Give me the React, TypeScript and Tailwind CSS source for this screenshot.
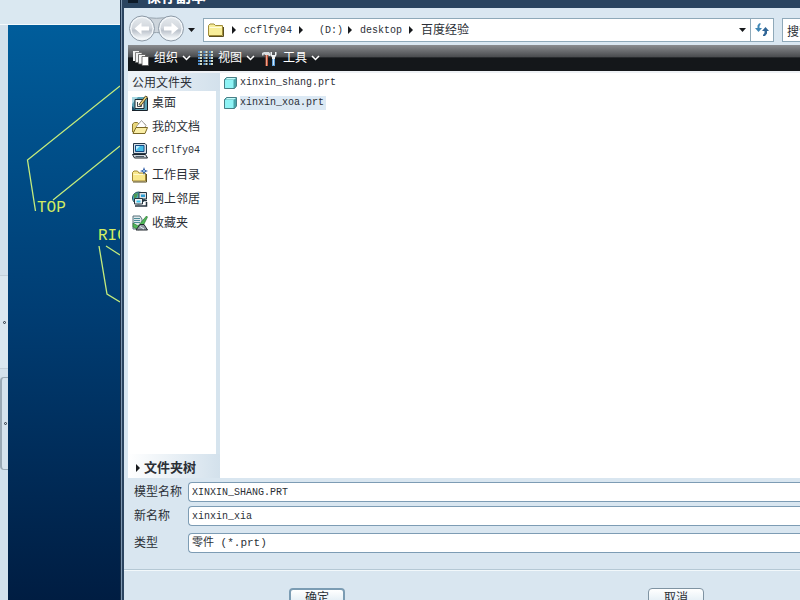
import type { ReactNode } from "react";

const cjk = "font-['Liberation_Sans','Noto_Sans_CJK_SC',sans-serif]";
const mono = "font-['Liberation_Mono','Noto_Sans_CJK_SC',monospace]";

const fieldClassName =
  "h-5 min-w-0 flex-1 rounded-l-sm border border-r-0 border-[#7d9cb4] bg-white pl-[3px] text-[#2b2f36] outline-none";

function Latin({ children }: { children: ReactNode }) {
  return (
    <span className="font-['Liberation_Mono',monospace] text-[10px]">
      {children}
    </span>
  );
}

function FolderIcon() {
  return (
    <svg viewBox="0 0 16 14" className="h-3.5 w-4 shrink-0" aria-hidden>
      <path
        d="M.5 12.500V2.500L2 1H6L7.500 2.500H14.500V12.500Z"
        fill="#f8ee9a"
        stroke="#a08c38"
      />
      <path d="M1.500 4.500H13.500" stroke="#fffcdc" />
      <path d="M1 13.500H15.500V4" stroke="#5a4f20" fill="none" />
    </svg>
  );
}

function DesktopIcon() {
  return (
    <svg viewBox="0 0 16 16" className="size-4 shrink-0" aria-hidden>
      <path d="M0 2H15V15H0Z" fill="#5ba3b5" />
      <path d="M0 2H6L0 9Z" fill="#a9d8e2" />
      <path d="M0 15V11L4 15Z" fill="#1c4d66" />
      <path d="M0 15.500H15.500V3" stroke="#17222b" fill="none" />
      <path d="M3 4.500H12V13.500H3Z" fill="#fbfbf4" stroke="#1d2b34" />
      <path d="M5.500 7V11.500H9.500V9" stroke="#3b4650" fill="none" />
      <path d="M7 9.500L13.500 1L15.500 2L9 10.500Z" fill="#ecd27a" stroke="#3a3013" strokeWidth=".8" />
    </svg>
  );
}

function DocumentsIcon() {
  return (
    <svg viewBox="0 0 16 16" className="size-4 shrink-0" aria-hidden>
      <path d="M.5 13V5L2.500 3.500H5.500L7 5H13V13Z" fill="#e9d77c" stroke="#8a7731" />
      <path d="M4 8L9.500 1.500L14 6.500L11 11Z" fill="#fff" stroke="#8b8b8b" strokeWidth=".8" />
      <path d="M1 14.500L4 8.500H15.500L13 14.500Z" fill="#faeea6" stroke="#7b6826" />
    </svg>
  );
}

function ComputerIcon() {
  return (
    <svg viewBox="0 0 16 16" className="size-4 shrink-0" aria-hidden>
      <path d="M1.500.500H13L14.500 2V10.500H1.500Z" fill="#d5dde4" stroke="#26394a" />
      <path d="M3.500 2.500H12V8.500H3.500Z" fill="#45bde8" stroke="#154a84" />
      <path d="M4 3H8L4 7Z" fill="#c2f0ff" />
      <path d="M.5 11.500H13.500L15.500 15H2.500Z" fill="#d3dae0" stroke="#1d242b" />
      <path d="M3.500 13.500H12" stroke="#4c5a66" />
    </svg>
  );
}

function WorkDirIcon() {
  return (
    <svg viewBox="0 0 16 16" className="size-4 shrink-0" aria-hidden>
      <path d="M.5 14V5.500L2 4H5.500L7 6H13.500V14Z" fill="#f9e88c" stroke="#a08634" />
      <path d="M1.500 7.500H13" stroke="#fff9cc" />
      <path d="M1 15H14.500V7" stroke="#5e5222" fill="none" />
      <path d="M12 0L13 3L16 4L13 5L12 8L11 5L8 4L11 3Z" fill="#1f4fa0" />
      <path d="M12 3V5M11 4H13" stroke="#a9dcff" />
    </svg>
  );
}

function NetworkIcon() {
  return (
    <svg viewBox="0 0 16 16" className="size-4 shrink-0" aria-hidden>
      <circle cx="6.500" cy="7" r="6" fill="#4fb0c2" stroke="#1f4d5a" />
      <path d="M2 3L6 2L5 6L2 8Z" fill="#4f9a54" />
      <path d="M7 1.500H14.500V8H7Z" fill="#d9e0e5" stroke="#27343f" />
      <path d="M9 3.500H13V6H9Z" fill="#2f9fd4" />
      <path d="M2.500 7.500H10.500V13H2.500Z" fill="#eef2f5" stroke="#27343f" />
      <path d="M4.500 9.500H8.500V11.500H4.500Z" fill="#37c3ea" />
      <path d="M11 9.500H15M3 15H14.500V11" stroke="#27343f" strokeWidth="1.500" fill="none" />
    </svg>
  );
}

function FavoritesIcon() {
  return (
    <svg viewBox="0 0 16 16" className="size-4 shrink-0" aria-hidden>
      <path d="M1 1H8L10 4V14H1Z" fill="#dfe8ea" stroke="#57717a" />
      <path d="M2 3.500H8M2 5.500H8M2 7.500H8" stroke="#4b8c98" />
      <path d="M1 8L6 11L14.500 1L15.500 2L11 11L7 15L1 12Z" fill="#4fb858" stroke="#236a2c" strokeWidth=".6" />
      <path d="M4 15L8 9.500H12L15.500 15Z" fill="#9199a4" stroke="#23282f" />
      <path d="M8 11.500L12 14" stroke="#e9eef2" />
    </svg>
  );
}

function PartIcon() {
  return (
    <svg viewBox="0 0 13 12" className="h-3 w-[13px] shrink-0" aria-hidden>
      <path d="M.5 2.500L2.500.5H12.500V9L10.500 11.500H.5Z" fill="#48a6aa" stroke="#487f86" />
      <path d="M1 3H9.500V11H1Z" fill="#8ff3f5" />
      <path d="M1.500 2.500L3 1H12L10 2.500Z" fill="#c4fbfb" />
    </svg>
  );
}

function OrganizeIcon() {
  return (
    <svg viewBox="0 0 16 15" className="h-[15px] w-4 shrink-0" aria-hidden>
      <path d="M0 0H6V10H0Z" fill="#f1f1f1" />
      <path d="M2.500 1.500H9V11.500H2.500Z" fill="#f1f1f1" stroke="#666" strokeWidth=".8" />
      <path d="M5.500 3.500H12.500V13H5.500Z" fill="#f6f6f6" stroke="#555" strokeWidth=".8" />
      <path d="M9 5.500H15.500V14.500H9Z" fill="#fff" stroke="#555" strokeWidth=".8" />
    </svg>
  );
}

function ViewsIcon() {
  const rows = [1, 4, 7, 10, 13];
  return (
    <svg viewBox="0 0 15 14" className="h-3.5 w-[15px] shrink-0" aria-hidden>
      {rows.map((y) => (
        <g key={y} strokeWidth="2">
          <path d={`M0 ${y}H2M5.500 ${y}H7.500M11 ${y}H13`} stroke="#4f8fd0" />
          <path d={`M2 ${y}H4M7.500 ${y}H9.500M13 ${y}H15`} stroke="#d4dcc4" />
        </g>
      ))}
    </svg>
  );
}

function ToolsIcon() {
  return (
    <svg viewBox="0 0 16 15" className="h-[15px] w-4 shrink-0" aria-hidden>
      <path d="M0 4V2L2 1H7L8.500 3V5H7L6 4H3L2 3L1 5Z" fill="#d9dde0" />
      <path d="M3.500 4H6V15H3.500Z" fill="#c9553a" />
      <path d="M4 4H5V15H4Z" fill="#e8a48c" />
      <path d="M8.500 1V4L10 6.500V8H13V6.500L14.500 4V1H13V4H10V1Z" fill="#eef1f3" />
      <path d="M10 8H13V15H10Z" fill="#5e9fd8" />
      <path d="M11 8H12V14H11Z" fill="#cfe5f6" />
    </svg>
  );
}

function NavArrows() {
  return (
    <div className="relative flex h-[27px] w-[55px] items-center justify-between">
      <svg viewBox="0 0 55 27" className="absolute inset-0 h-full w-full" aria-hidden>
        <defs>
          <linearGradient id="orb" x1="0" y1="0" x2="0" y2="1">
            <stop offset="0" stopColor="#e3e8ec" />
            <stop offset=".45" stopColor="#d3d8de" />
            <stop offset=".6" stopColor="#bcc3cc" />
            <stop offset="1" stopColor="#f8fbfd" />
          </linearGradient>
        </defs>
        <path d="M13 1.500Q27.500 5 42 1.500V20Q27.500 15 13 20Z" fill="#cdd5dc" stroke="#98a4ae" />
        <circle cx="13" cy="13.500" r="12.500" fill="#f2f6f9" stroke="#8c99a6" />
        <circle cx="42" cy="13.500" r="12.500" fill="#f2f6f9" stroke="#8c99a6" />
        <circle cx="13" cy="13.500" r="10.500" fill="url(#orb)" />
        <circle cx="42" cy="13.500" r="10.500" fill="url(#orb)" />
        <path d="M5.500 13.500L12.500 7.500V11.500H20V15.500H12.500V19.500Z" fill="#fff" />
        <path d="M49.500 13.500L42.500 7.500V11.500H35V15.500H42.500V19.500Z" fill="#fff" />
      </svg>
      <button type="button" aria-label="后退" className="relative size-[26px] rounded-full" />
      <button type="button" aria-label="前进" className="relative size-[26px] rounded-full" />
    </div>
  );
}

function DownTriangle() {
  return (
    <svg viewBox="0 0 7 4" className="h-1 w-[7px] shrink-0" aria-hidden>
      <path d="M0 0H7L3.500 4Z" fill="#17191c" />
    </svg>
  );
}

function RightTriangle() {
  return (
    <svg viewBox="0 0 4 8" className="h-2 w-1 shrink-0" aria-hidden>
      <path d="M0 0L4 4L0 8Z" fill="#17191c" />
    </svg>
  );
}

function ToolbarMenu({ icon, label }: { icon: ReactNode; label: string }) {
  return (
    <button type="button" className="flex items-center text-white">
      {icon}
      <span className="ml-[5px] w-6">{label}</span>
      <svg viewBox="0 0 9 6" className="ml-1 h-1.5 w-[9px]" aria-hidden>
        <path d="M1 1L4.500 4.500L8 1" stroke="#fff" strokeWidth="1.500" fill="none" />
      </svg>
    </button>
  );
}

const PLACES = [
  { label: "桌面", icon: <DesktopIcon /> },
  { label: "我的文档", icon: <DocumentsIcon /> },
  { label: <Latin>ccflfy04</Latin>, icon: <ComputerIcon /> },
  { label: "工作目录", icon: <WorkDirIcon /> },
  { label: "网上邻居", icon: <NetworkIcon /> },
  { label: "收藏夹", icon: <FavoritesIcon /> },
];

const FILES = [
  { name: "xinxin_shang.prt", selected: false },
  { name: "xinxin_xoa.prt", selected: true },
];

function ModelView() {
  return (
    <div className="flex w-[120px] shrink-0 flex-col bg-[#dae8f1]">
      <div className="h-[25px] shrink-0 border-b border-[#f4fafc]" />
      <div className="flex min-h-0 flex-1">
        <div className="flex w-2 shrink-0 flex-col bg-[#d3e1ec] pt-[250px]">
          <div className="flex h-[94px] items-center justify-center border-y border-[#c3d0da] bg-[#dae7f0]">
            <span className="size-[3px] rounded-full border border-[#27323d]" />
          </div>
          <div className="mt-2 flex h-[93px] items-center justify-center rounded-l border border-r-0 border-l-2 border-[#9aa9b5] bg-[#d6e3ed]">
            <span className="size-[3px] rounded-full border border-[#27323d]" />
          </div>
        </div>
        <div className="min-w-0 flex-1 overflow-hidden bg-linear-to-b from-[#005d9b] via-[#003d73] to-[#001d42]">
          <svg
            viewBox="8 25 112 300"
            className="h-[300px] w-28"
            fill="none"
            stroke="#c4ec7c"
            strokeWidth="1.300"
            role="img"
            aria-label="TOP RIGHT"
          >
            <path d="M120 86L27.500 160L35.500 211M120 146L53 200" />
            <path d="M99 246L107 294L120 302M106 246L120 255" />
            <g
              fill="#d3ec62"
              stroke="none"
              fontSize="16"
              fontFamily="'Liberation Mono', monospace"
            >
              <text x="37" y="212">TOP</text>
              <text x="98" y="240">RIGHT</text>
            </g>
          </svg>
        </div>
      </div>
    </div>
  );
}

function AddressBar() {
  return (
    <div className="flex h-[37px] shrink-0 items-end overflow-hidden pb-[3px] pl-[5px]">
      <NavArrows />
      <button type="button" aria-label="最近位置" className="ml-1 flex h-6 w-2 items-center">
        <DownTriangle />
      </button>
      <nav
        aria-label="路径"
        className="ml-[7px] flex h-6 min-w-0 flex-1 items-center border border-[#8fa9b9] bg-white pr-1 pl-1"
      >
        <FolderIcon />
        <span className="ml-2 flex flex-1 items-center whitespace-nowrap">
          <RightTriangle />
          <a href="#host" className="ml-2"><Latin>ccflfy04</Latin></a>
          <span className="ml-[7px] flex"><RightTriangle /></span>
          <a href="#d" className="ml-4"><Latin>(D:)</Latin></a>
          <span className="ml-[5px] flex"><RightTriangle /></span>
          <a href="#desktop" className="ml-2"><Latin>desktop</Latin></a>
          <span className="ml-[7px] flex"><RightTriangle /></span>
          <a href="#baidu" className="ml-2">百度经验</a>
        </span>
        <button type="button" aria-label="展开路径">
          <DownTriangle />
        </button>
      </nav>
      <button
        type="button"
        aria-label="刷新"
        className="flex h-6 w-[23px] shrink-0 items-center justify-center border border-l-0 border-[#8fa9b9] bg-white"
      >
        <svg viewBox="0 0 14 14" className="size-3.5" aria-hidden>
          <path d="M5.500 0V1.500L4.500 3V5H7L3.500 9L0 5H2.500V2.500L4 .5Z" fill="#3f86b4" />
          <path d="M10.500 4L14 8H12V10.500L10 13H8V12L9.500 10V8H7Z" fill="#2f6596" />
        </svg>
      </button>
      <div className="ml-2 h-6 w-[18px] shrink-0 overflow-hidden">
        <input
          aria-label="搜索"
          defaultValue="搜索..."
          className="h-6 w-32 border border-[#8fa9b9] bg-white pl-1 outline-none"
        />
      </div>
    </div>
  );
}

function Sidebar() {
  return (
    <aside className="flex w-[92px] shrink-0 flex-col">
      <h2 className="h-[18px] bg-linear-to-r from-[#eef3f8] to-[#d3e1ec] pl-1 leading-5">
        公用文件夹
      </h2>
      <ul className="flex-1 border-r-4 border-[#d6e4ee] bg-white">
        {PLACES.map((place, index) => (
          <li key={index}>
            <button type="button" className="flex h-6 w-full items-center gap-1 pl-1 whitespace-nowrap">
              {place.icon}
              {place.label}
            </button>
          </li>
        ))}
      </ul>
      <button
        type="button"
        className="flex h-6 items-center gap-1 bg-linear-to-r from-white to-[#d3e1ec] pt-1 pl-2 text-[13px] font-bold"
      >
        <RightTriangle />
        文件夹树
      </button>
    </aside>
  );
}

function SaveForm() {
  return (
    <form className="h-[122px] shrink-0 overflow-hidden bg-[#d9e6f0] pt-1">
      <div className="flex items-center pl-2.5">
        <label htmlFor="model" className="w-[54px]">模型名称</label>
        <input
          id="model"
          defaultValue="XINXIN_SHANG.PRT"
          className={`${fieldClassName} ${mono} text-[10px]`}
        />
      </div>
      <div className="mt-1 flex items-center pl-2.5">
        <label htmlFor="new-name" className="w-[54px]">新名称</label>
        <input
          id="new-name"
          defaultValue="xinxin_xia"
          className={`${fieldClassName} ${mono} text-[10px]`}
        />
      </div>
      <div className="mt-[7px] flex items-center pl-2.5">
        <label htmlFor="type" className="w-[54px]">类型</label>
        <select
          id="type"
          className={`${fieldClassName} ${mono} appearance-none text-[11px]`}
        >
          <option>零件 (*.prt)</option>
        </select>
      </div>
      <div className="mt-4 grid grid-cols-[1fr_1fr] border-t border-[#b5c8d4] pt-[18px] shadow-[inset_0_1px_0_#f2f8fb]">
        <button
          type="button"
          className="ml-[165px] h-5 w-14 rounded-sm border-2 border-[#7b9cb3] bg-linear-to-b from-white to-[#d9e8f1] leading-4"
        >
          确定
        </button>
        <button
          type="button"
          className="ml-[186px] h-5 w-14 rounded-sm border border-[#7f93a2] bg-linear-to-b from-white to-[#d9e8f1] leading-4"
        >
          取消
        </button>
      </div>
    </form>
  );
}

export default function App() {
  return (
    <div
      className={`flex h-screen w-full overflow-hidden text-[12px] leading-4 text-[#2b2f36] ${cjk}`}
    >
      <ModelView />
      <section
        role="dialog"
        aria-label="保存副本"
        className="flex min-w-0 flex-1 border-l border-[#1b2f47] bg-[#2b4460]"
      >
        <div className="w-px shrink-0 bg-[#7e97b0]" />
        <div className="ml-0.5 flex min-w-0 flex-1 flex-col bg-[#dae7f1]">
          <header className="flex h-2 shrink-0 items-end overflow-hidden bg-[#2a4460] pb-[3px] pl-1">
            <span className="mb-0.5 h-4 w-2.5 shrink-0 self-end bg-[#0d1a28]" />
            <h1 className="ml-2 text-[15px] leading-4 font-bold text-white">保存副本</h1>
          </header>
          <AddressBar />
          <div className="ml-1 flex h-[26px] shrink-0 items-center gap-[7px] bg-linear-to-b from-[#8b8d90] via-[#4b4d50] via-45% to-[#14171a] to-50% pl-[5px]">
            <ToolbarMenu icon={<OrganizeIcon />} label="组织" />
            <ToolbarMenu icon={<ViewsIcon />} label="视图" />
            <ToolbarMenu icon={<ToolsIcon />} label="工具" />
          </div>
          <div className="ml-1 flex min-h-0 flex-1 border-t-2 border-[#eef1f5]">
            <Sidebar />
            <ul className="min-w-0 flex-1 bg-white pl-1">
              {FILES.map((file) => (
                <li key={file.name} className="flex h-5 items-center gap-[3px]">
                  <PartIcon />
                  <span
                    className={`flex h-3.5 items-center pr-0.5 ${file.selected ? "bg-[#dce9f4]" : ""}`}
                  >
                    <Latin>{file.name}</Latin>
                  </span>
                </li>
              ))}
            </ul>
          </div>
          <SaveForm />
        </div>
      </section>
    </div>
  );
}
